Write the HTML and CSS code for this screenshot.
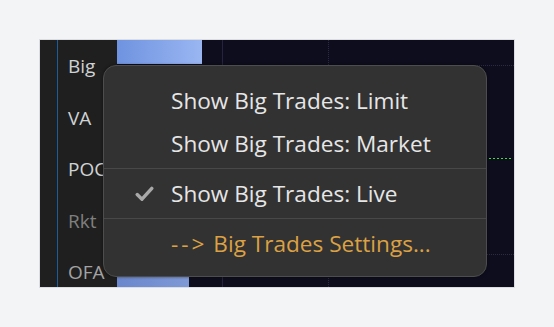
FILE: index.html
```html
<!DOCTYPE html>
<html lang="en">
<head>
    <meta charset="UTF-8">
    <title>Big Trades menu</title>
    <link rel="stylesheet" href="styles.css">
</head>
<body>
<div class="shot">
    <div class="side">
        <div class="rail"></div>
        <div class="labels">
            <div class="lbl">Big</div>
            <div class="lbl">VA</div>
            <div class="lbl">POC</div>
            <div class="lbl dim">Rkt</div>
            <div class="lbl mid">OFA</div>
        </div>
    </div>
    <div class="chart">
        <div class="bar bar-top"></div>
        <div class="bar bar-bottom"></div>
        <div class="vline solid"></div>
        <div class="vline dotted"></div>
        <div class="hline h1"></div>
        <div class="hline h2"></div>
        <div class="green-line"></div>
    </div>

    <!-- context menu over the chart -->
    <div class="menu">
        <div class="item">Show Big Trades: Limit</div>
        <div class="item">Show Big Trades: Market</div>
        <div class="sep"></div>
        <div class="item checked">
            <svg class="check" width="19" height="16" viewBox="0 0 19 16">
                <path d="M2.2 8.6 L7 13.2 L16.8 2.4" fill="none" stroke="#a9a9a9" stroke-width="3.4" stroke-linecap="round" stroke-linejoin="round"/>
            </svg>
            Show Big Trades: Live
        </div>
        <div class="sep"></div>
        <div class="item link"><span class="arrow">--&gt;</span> Big Trades Settings...</div>
    </div>
</div>
</body>
</html>
```

FILE: styles.css
```css
body { margin: 0; padding: 39px; background: #f3f4f6; font-family: "Open Sans", "Noto Sans", sans-serif; }
.shot { position: relative; width: 474px; height: 247px; border: 1px solid #dcdde0; display: flex; background: #0d0d1e; overflow: hidden; }

.side { width: 77px; display: flex; background: #1f1f1f; }
.rail { width: 17px; border-right: 1px solid #1e5d9c; }
.labels { padding: 1px 0 0 10px; }
.lbl { height: 51.6px; line-height: 51.6px; font-size: 19px; color: #cfd2d4; white-space: nowrap; }
.lbl.dim { color: #7f7f7f; }
.lbl.mid { color: #a3a3a3; }

.chart { position: relative; flex: 1; }
.bar { position: absolute; left: 0; background: linear-gradient(90deg, #6f93e0, #9ab6f2); }
.bar-top { top: 0; width: 85px; height: 24px; }
.bar-bottom { bottom: 0; width: 72px; height: 10px; background: linear-gradient(90deg, #6b87cd, #7f99d6); }
.vline { position: absolute; top: 0; bottom: 0; width: 0; }
.vline.solid { left: 105px; border-left: 1px solid #24243a; }
.vline.dotted { left: 211px; border-left: 1px dotted #2a2a40; }
.hline { position: absolute; left: 0; right: 0; height: 0; border-top: 1px dotted #2b2b40; }
.h1 { top: 25px; }
.h2 { top: 214px; }
.green-line { position: absolute; top: 118px; left: 372px; width: 23px; height: 1px; background: repeating-linear-gradient(90deg, #46d83c 0 2px, transparent 2px 4px); }

.menu { position: absolute; left: 63px; top: 25px; width: 384px; height: 212px; padding: 13px 0 0; box-sizing: border-box;
    background: #323232; border: 1px solid #4d4d4d; border-radius: 13px; box-shadow: 0 0 3px rgba(0,0,0,0.5); }
.item { position: relative; height: 43px; line-height: 43px; padding-left: 67px; font-size: 22.6px; color: #e6e6e6; white-space: nowrap; }
.item.link { color: #dca143; }
.arrow { letter-spacing: 3px; }
.sep { height: 1px; margin: 3px 0 3px; background: #484848; }
.check { position: absolute; left: 31px; top: 14px; }
```
